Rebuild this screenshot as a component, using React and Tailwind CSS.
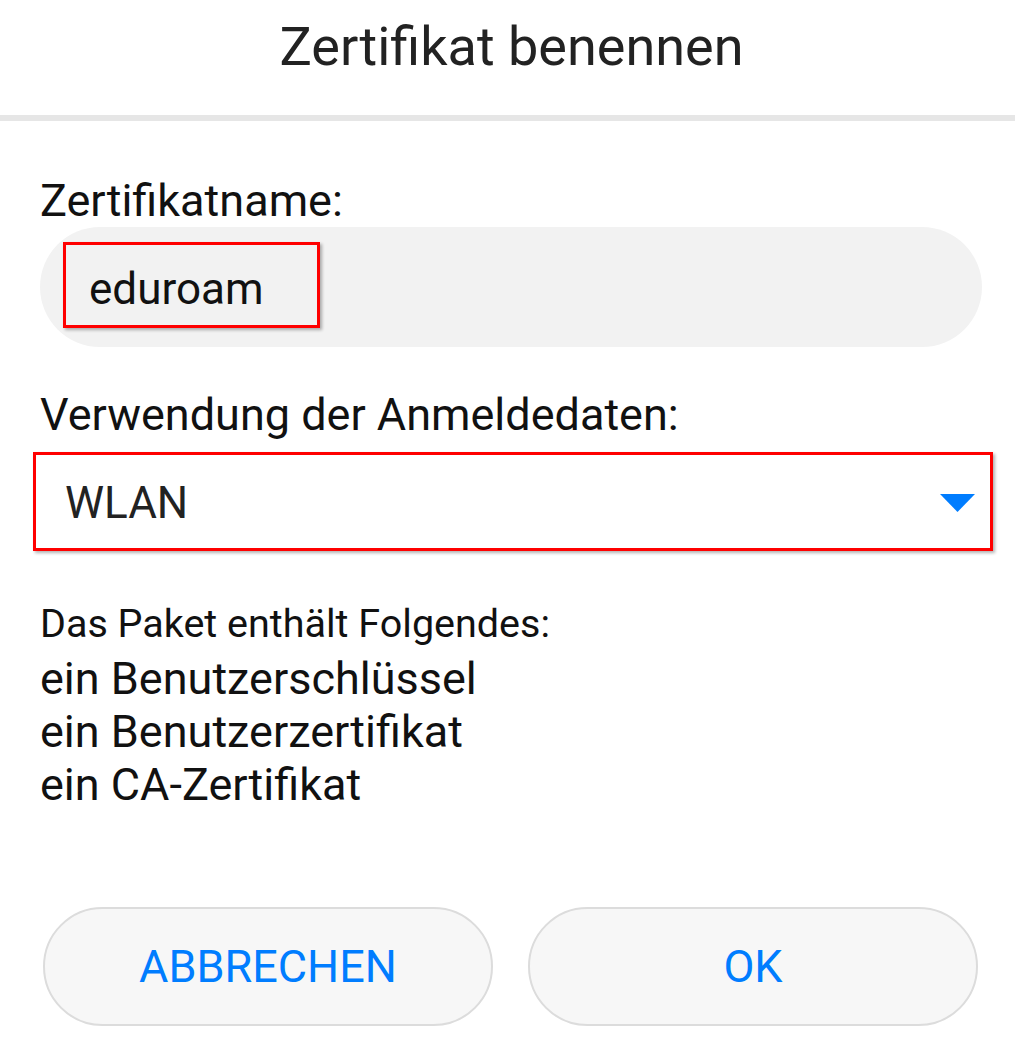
import { useState } from 'react';

const items = ['ein Benutzerschlüssel', 'ein Benutzerzertifikat', 'ein CA-Zertifikat'];

export default function App() {
  const [name, setName] = useState('eduroam');

  return (
    <div className="w-[1015px] h-[1055px] bg-white overflow-hidden text-[#111]" style={{ fontFamily: 'Roboto, "Noto Sans", sans-serif' }}>
      {/* Dialog title */}
      <div className="h-[115px] pt-[20px] pl-[8px] flex justify-center">
        <h1 className="text-[54px] leading-none text-[#222]">Zertifikat benennen</h1>
      </div>
      <div className="h-[6px] bg-[#e6e6e6]" />

      <div className="pl-[40px] pr-[33px]">
        <p className="mt-[57px] text-[45px] leading-none">Zertifikatname:</p>

        {/* Name field */}
        <div className="mt-[4px] h-[120px] rounded-full bg-[#f2f2f2] pl-[23px] pt-[15px]">
          <div className="w-[257px] h-[86px] border-[3px] border-[#ff0000] shadow-[2px_2px_3px_rgba(0,0,0,0.3)] pl-[23px] pt-[22px]">
            <span className="text-[44px] leading-none text-[#111]">{name}</span>
          </div>
        </div>

        <p className="mt-[45px] text-[45px] leading-none">Verwendung der Anmeldedaten:</p>
      </div>

      {/* Credential usage select */}
      <div className="mt-[15px] ml-[33px] w-[960px] h-[99px] border-[3px] border-[#ff0000] shadow-[2px_2px_3px_rgba(0,0,0,0.3)] flex items-center justify-between pl-[29px] pr-[15px]">
        <span className="mt-[3px] text-[44px] leading-none text-[#222]">WLAN</span>
        <svg width="35" height="18" viewBox="0 0 35 18" className="mt-[3px]">
          <polygon points="0,0 35,0 17.5,18" fill="#007dff" />
        </svg>
      </div>

      <div className="pl-[40px]">
        <p className="mt-[53px] text-[39.5px] leading-none">Das Paket enthält Folgendes:</p>
        <ul className="mt-[8px]">
          {items.map((it) => (
            <li key={it} className="text-[45px] leading-[53px]">{it}</li>
          ))}
        </ul>
      </div>

      {/* Actions */}
      <div className="mt-[96px] ml-[43px] flex gap-[35px]">
        <button className="w-[450px] h-[119px] rounded-full border-2 border-[#dcdcdc] bg-[#f7f7f7] text-[45px] leading-none text-[#007dff]">
          ABBRECHEN
        </button>
        <button onClick={() => setName(name)} className="w-[450px] h-[119px] rounded-full border-2 border-[#dcdcdc] bg-[#f7f7f7] text-[45px] leading-none text-[#007dff]">
          OK
        </button>
      </div>
    </div>
  );
}
